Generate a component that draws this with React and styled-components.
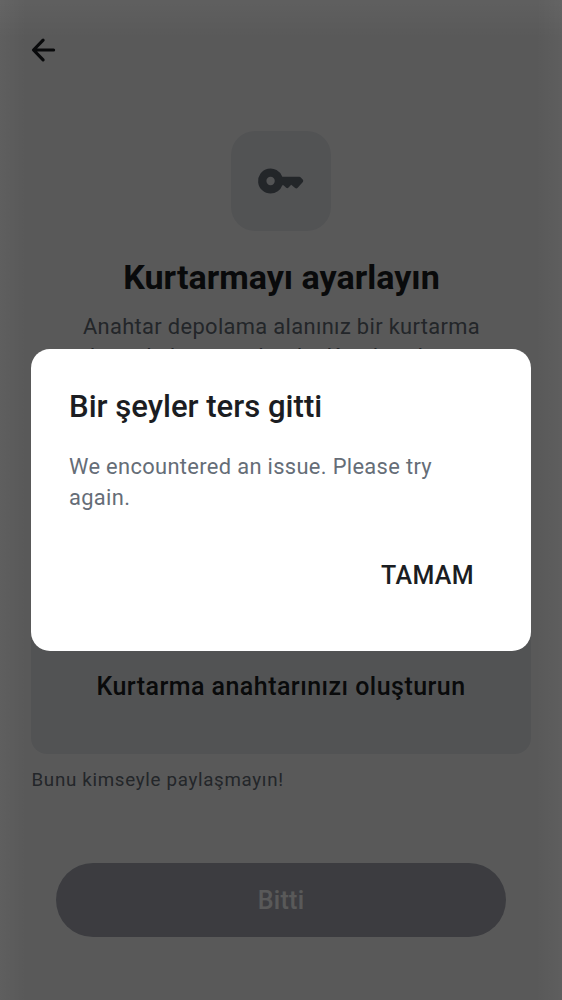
import React from "react";
import styled, { createGlobalStyle } from "styled-components";

const GlobalStyle = createGlobalStyle`
  *, *::before, *::after { box-sizing: border-box; }
  body { margin: 0; background: #fff; }
  h1, h2, p { margin: 0; }
  button { border: 0; padding: 0; background: none; font: inherit; color: inherit; }
`;

const Screen = styled.main`
  position: relative;
  display: flex;
  flex-direction: column;
  width: 562px;
  height: 1000px;
  overflow: hidden;
  padding: 0 31px;
  background: #fff;
  color: #1b1d22;
  font-family: Roboto, "Liberation Sans", sans-serif;
`;

const TopBar = styled.header`
  display: flex;
  align-items: center;
  height: 100px;
  margin-left: -6px;
`;

const IconButton = styled.button`
  display: flex;
  width: 37px;
  height: 37px;
`;

const Intro = styled.section`
  display: flex;
  flex-direction: column;
  align-items: center;
  height: 473px;
  padding-top: 31px;
  text-align: center;
`;

const IconTile = styled.div`
  display: flex;
  align-items: center;
  justify-content: center;
  width: 100px;
  height: 100px;
  border-radius: 24px;
  background: #ebedf1;
  color: #656d77;
`;

const Heading = styled.h1`
  margin-top: 25px;
  padding-left: 1px;
  font-size: 34.1px;
  line-height: 42px;
  font-weight: 700;
`;

const Description = styled.p`
  margin-top: 14px;
  padding-left: 1px;
  font-size: 21.86px;
  line-height: 30px;
  letter-spacing: 0.35px;
  color: #656d77;
  white-space: nowrap;
`;

const KeyCard = styled.button`
  display: flex;
  align-items: center;
  justify-content: center;
  height: 136px;
  border-radius: 16px;
  margin-top: 45px;
  background: #ebedf1;
  font-size: 25px;
  font-weight: 500;
  letter-spacing: 0.46px;
`;

const Hint = styled.p`
  margin-top: 14px;
  padding-left: 0.5px;
  font-size: 18.74px;
  line-height: 25px;
  letter-spacing: 0.69px;
  color: #656d77;
`;

const DoneButton = styled.button`
  display: flex;
  align-items: center;
  justify-content: center;
  height: 74.8px;
  margin: 69.5px 25px 0;
  padding-top: 1px;
  border-radius: 38px;
  background: #abadb8;
  color: #fff;
  font-size: 25px;
  font-weight: 500;
  letter-spacing: 0.3px;
`;

const Scrim = styled.div`
  position: absolute;
  inset: 0;
  display: flex;
  align-items: center;
  justify-content: center;
  padding-bottom: 0.5px;
  background:
    linear-gradient(to right, rgba(255, 255, 255, 0.035), transparent 26px),
    linear-gradient(to left, rgba(255, 255, 255, 0.03), transparent 26px),
    linear-gradient(to bottom, rgba(255, 255, 255, 0.04), transparent 38px),
    rgba(0, 0, 0, 0.65);
`;

const Dialog = styled.section`
  display: flex;
  flex-direction: column;
  width: 500px;
  height: 301.5px;
  padding: 39px 38px 38px;
  border-radius: 19px;
  background: #fff;
`;

const DialogTitle = styled.h2`
  font-size: 31.1px;
  line-height: 38px;
  font-weight: 500;
`;

const DialogText = styled.p`
  margin-top: 24.6px;
  font-size: 21.86px;
  line-height: 31.2px;
  letter-spacing: 0.34px;
  color: #656d77;
`;

const DialogActions = styled.div`
  display: flex;
  justify-content: flex-end;
  margin-top: 47.2px;
  padding-right: 19px;
`;

const TextButton = styled.button`
  font-size: 25px;
  line-height: 32px;
  font-weight: 500;
  letter-spacing: 0.35px;
`;

const ArrowIcon = () => (
  <svg width="37" height="37" viewBox="0 0 37 37" fill="none" stroke="currentColor" strokeWidth="3.2" strokeLinecap="round" strokeLinejoin="round">
    <path d="M28.6 18H9M18.1 8.2l-9.6 9.8 9.6 9.8" />
  </svg>
);

const KeyIcon = () => (
  <svg width="50" height="50" viewBox="0 0 24 24" fill="currentColor">
    <path
      fillRule="evenodd"
      d="M7 18a6 6 0 1 1 5.65-8H20.8c.27 0 .5.1.7.3l.9 1c.35.35.35.9 0 1.25l-2.4 2.7c-.35.38-.85.4-1.22.1L16.9 13.85l-1.4 1.4c-.3.3-.7.3-1 0L13.2 14h-.55A6 6 0 0 1 7 18Zm0-4a2 2 0 1 0 0-4 2 2 0 0 0 0 4Z"
    />
  </svg>
);

export default function App() {
  return (
    <>
      <GlobalStyle />
      <Screen>
        <TopBar>
          <IconButton aria-label="Geri"><ArrowIcon /></IconButton>
        </TopBar>
        <Intro>
          <IconTile><KeyIcon /></IconTile>
          <Heading>Kurtarmayı ayarlayın</Heading>
          <Description>
            Anahtar depolama alanınız bir kurtarma<br />
            anahtarıyla korunmaktadır. Kurulumdan sonra
          </Description>
        </Intro>
        <KeyCard>Kurtarma anahtarınızı oluşturun</KeyCard>
        <Hint>Bunu kimseyle paylaşmayın!</Hint>
        <DoneButton>Bitti</DoneButton>
        <Scrim>
          <Dialog role="dialog" aria-modal="true">
            <DialogTitle>Bir şeyler ters gitti</DialogTitle>
            <DialogText>We encountered an issue. Please try again.</DialogText>
            <DialogActions>
              <TextButton>TAMAM</TextButton>
            </DialogActions>
          </Dialog>
        </Scrim>
      </Screen>
    </>
  );
}
